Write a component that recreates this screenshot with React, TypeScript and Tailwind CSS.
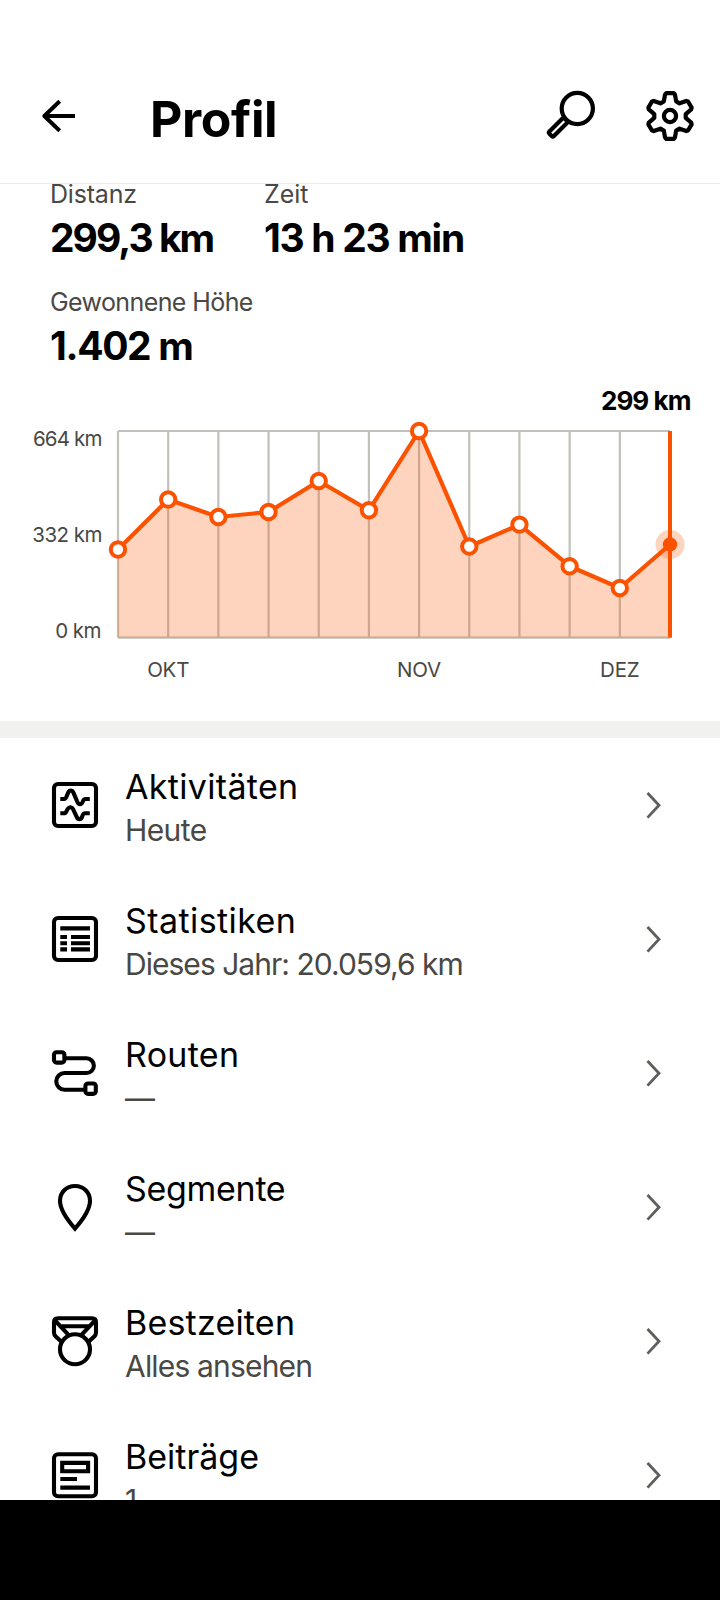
import type { ReactNode } from 'react';
import { clsx } from 'clsx';

const weeks = [
    { y: 549.5 },
    { y: 499.5, month: 'OKT' },
    { y: 517 },
    { y: 512 },
    { y: 481 },
    { y: 510.3 },
    { y: 431, month: 'NOV' },
    { y: 546.5 },
    { y: 524.6 },
    { y: 566.2 },
    { y: 588, month: 'DEZ' },
    { y: 544.5 },
];

const CHART = { left: 118, right: 670, top: 431, bottom: 637.7 };

// Six teeth around the origin
const gearPoints = Array.from({ length: 6 }, (_, i) => {
    const a = (i * Math.PI) / 3;
    return [[-6.2, -14.6], [-4.9, -21.6], [-3.6, -22.9], [3.6, -22.9], [4.9, -21.6], [6.2, -14.6]]
        .map(([x, y]) => `${(x * Math.cos(a) - y * Math.sin(a)).toFixed(2)},${(x * Math.sin(a) + y * Math.cos(a)).toFixed(2)}`)
        .join(' ');
}).join(' ');

function Chart() {
    const step = (CHART.right - CHART.left) / (weeks.length - 1);
    const points = weeks.map((w, i) => ({ ...w, x: CHART.left + i * step }));
    const line = points.map(p => `${p.x},${p.y}`).join(' ');
    const last = points[points.length - 1];

    return (
        <svg width="720" height="351" viewBox="0 370 720 351" className="block shrink-0">
            <g stroke="#c1c0ba" strokeWidth="2.2">
                {points.map(p => (
                    <line key={p.x} x1={p.x} x2={p.x} y1={CHART.top} y2={CHART.bottom} />
                ))}
                <line x1={CHART.left} x2={CHART.right} y1={CHART.top} y2={CHART.top} />
                <line x1={CHART.left} x2={CHART.right} y1={CHART.bottom} y2={CHART.bottom} />
            </g>
            <polygon points={`${CHART.left},${CHART.bottom} ${line} ${CHART.right},${CHART.bottom}`} fill="#fc5200" fillOpacity="0.25" />
            <circle cx={last.x} cy={last.y} r="14.5" fill="#fc5200" fillOpacity="0.25" />
            <line x1={CHART.right} x2={CHART.right} y1={CHART.top} y2={CHART.bottom} stroke="#fc5200" strokeWidth="4" />
            <polyline points={line} fill="none" stroke="#fc5200" strokeWidth="4.2" strokeLinejoin="round" />
            {points.slice(0, -1).map(p => (
                <circle key={p.x} cx={p.x} cy={p.y} r="7.2" fill="white" stroke="#fc5200" strokeWidth="4" />
            ))}
            <circle cx={last.x} cy={last.y} r="7.2" fill="#fc5200" />

            <g fill="#494844" className="text-[20.5px]">
                <text x="33" y="446" className="tracking-[-0.85px]">664 km</text>
                <text x="32.3" y="542" className="tracking-[-0.55px]">332 km</text>
                <text x="55.3" y="637.5" className="tracking-[-0.6px]">0 km</text>
            </g>
            <g fill="#494844" className="text-[20.5px] tracking-[-0.2px]" textAnchor="middle">
                {points.filter(p => p.month).map(p => (
                    <text key={p.month} x={p.x} y="677">{p.month}</text>
                ))}
            </g>
            <text x="601" y="410" className="text-[26px] font-bold tracking-[-0.95px]">299 km</text>
        </svg>
    );
}

interface StatProps {
    label: string;
    value: string;
    labelClass?: string;
    valueClass: string;
}

function Stat({ label, value, labelClass, valueClass }: StatProps) {
    return (
        <div>
            <div className={clsx('text-[25px] leading-[30px] text-[#494844] whitespace-nowrap', labelClass)}>{label}</div>
            <div className={clsx('mt-[5px] text-[39px] leading-[48px] font-bold whitespace-nowrap', valueClass)}>{value}</div>
        </div>
    );
}

const rows: { title: string; titleClass?: string; sub: string; subClass?: string; icon: ReactNode }[] = [
    {
        title: 'Aktivitäten',
        titleClass: 'tracking-[0.33px]',
        sub: 'Heute',
        subClass: 'tracking-[-0.6px]',
        icon: (
            <>
                <rect x="3" y="3" width="42" height="42" rx="4" />
                <path d="M9.3 18H13.2C14.6 18 15 17 15.6 15.4L17.2 11.6C18.4 8.7 21.2 8.7 22.4 11.6L26.4 21C27.6 23.8 30.4 23.8 31.6 21L32 20C32.6 18.6 33.2 18 34.6 18H38.8" />
                <path d="M9.3 32.3H13C14.4 32.3 15 31.6 15.6 30L16.8 27.8C18.2 25.5 21 25.7 22.2 28.3L25.8 36.2C27 38.9 29.8 38.9 31 36.2L31.4 34.8C32 33 32.8 32.3 34.2 32.3H38.8" />
            </>
        ),
    },
    {
        title: 'Statistiken',
        titleClass: 'tracking-[0.42px]',
        sub: 'Dieses Jahr: 20.059,6 km',
        subClass: 'tracking-[-0.97px]',
        icon: (
            <>
                <rect x="3" y="3" width="42" height="42" rx="4" />
                <path d="M9.3 13.4H39M9.3 22H16M20 22H39M9.3 28.2H16M20 28.2H39M9.3 34.4H16M20 34.4H39" />
            </>
        ),
    },
    {
        title: 'Routen',
        titleClass: 'tracking-[0.3px]',
        sub: '—',
        icon: (
            <>
                <rect x="3" y="3.2" width="10.4" height="10.4" rx="2.6" />
                <rect x="34.4" y="34.5" width="10.4" height="10.4" rx="2.6" />
                <path d="M14.5 9.3H35.5A7.3 7.3 0 0 1 35.5 24H13.6A8.3 8.3 0 0 0 13.6 40.7H33.5" />
            </>
        ),
    },
    {
        title: 'Segmente',
        titleClass: 'tracking-[-0.3px]',
        sub: '—',
        icon: <path strokeLinejoin="miter" d="M24 3C15.3 3 9 9.3 9 17.8C9 26.5 15.5 36 24 45.6C32.5 36 39 26.5 39 17.8C39 9.3 32.7 3 24 3Z" />,
    },
    {
        title: 'Bestzeiten',
        titleClass: 'tracking-[0.2px]',
        sub: 'Alles ansehen',
        subClass: 'tracking-[-0.82px]',
        icon: (
            <>
                <circle cx="24" cy="32.3" r="15" />
                <path d="M10.2 24.6L5 19.8C3.6 18.5 3 17.4 3 15.8V5.4C3 2.8 4.6 1.3 7 1.3H41C43.4 1.3 45 2.8 45 5.4V15.8C45 17.4 44.4 18.5 43 19.8L37.8 24.6" />
                <path d="M4 3.5L18 18.3M44 3.5L30 18.3M9.5 9.3H38.5" />
            </>
        ),
    },
    {
        title: 'Beiträge',
        sub: '1',
        icon: (
            <>
                <rect x="3" y="3.2" width="42" height="42" rx="4" />
                <path strokeLinejoin="miter" d="M11.2 11.9H37.1V20.3H11.2ZM9.3 28H26M9.3 36.6H39" />
            </>
        ),
    },
];

export default function App() {
    return (
        <div className="flex h-[1600px] w-[720px] flex-col overflow-hidden bg-white font-['Inter','Liberation_Sans',sans-serif] text-black">
            <header className="relative z-10 flex h-[184px] shrink-0 items-start border-b border-[#ebebea] bg-white pt-[88px] pl-[40px]">
                <svg width="40" height="56" viewBox="40 88 40 56" fill="none" stroke="black" strokeWidth="4" strokeLinejoin="round">
                    <path d="M75 116H45M59.7 101.3L44.3 116L59.7 130.7" />
                </svg>
                <h1 className="ml-[70px] text-[50px] leading-[62px] font-bold tracking-[-0.4px]">Profil</h1>
                <svg width="180" height="56" viewBox="540 88 180 56" fill="none" stroke="black" strokeWidth="4.2" strokeLinejoin="round" className="ml-auto">
                    <circle cx="577.3" cy="108.5" r="15.6" />
                    <rect x="-3.2" y="0" width="6.4" height="21.5" rx="1.5" transform="translate(565.8 119.7) rotate(45)" />
                    <g transform="translate(670 116)">
                        <polygon points={gearPoints} />
                        <circle r="6.1" />
                    </g>
                </svg>
            </header>

            <main className="flex h-[1316px] shrink-0 flex-col overflow-hidden">
                <section className="-mt-[5px] flex h-[191px] shrink-0 flex-col gap-[25px] pl-[50px]">
                    <div className="grid grid-cols-[214px_1fr]">
                        <Stat label="Distanz" value="299,3 km" labelClass="tracking-[-0.2px]" valueClass="tracking-[-1.95px]" />
                        <Stat label="Zeit" value="13 h 23 min" valueClass="tracking-[-1.3px]" />
                    </div>
                    <Stat label="Gewonnene Höhe" value="1.402 m" labelClass="tracking-[-0.6px]" valueClass="tracking-[-1.35px]" />
                </section>

                <Chart />
                <div className="h-[17px] shrink-0 bg-[#f1f1ef]" />

                {rows.map(row => (
                    <div key={row.title} className="flex h-[134px] shrink-0 items-center pr-[58px] pl-[51px]">
                        <svg width="48" height="48" viewBox="0 0 48 48" fill="none" stroke="black" strokeWidth="4.1" strokeLinejoin="round" className="shrink-0 overflow-visible">
                            {row.icon}
                        </svg>
                        <div className="ml-[26px] flex-1 self-start pt-[27px]">
                            <div className={clsx('text-[34px] leading-[44px]', row.titleClass)}>{row.title}</div>
                            <div className={clsx('text-[30px] leading-[43px] text-[#494844]', row.subClass)}>{row.sub}</div>
                        </div>
                        <svg width="16" height="28" viewBox="0 0 16 28" fill="none" stroke="#5f5e5a" strokeWidth="2.8">
                            <path d="M1.5 2L13 14.3L1.5 26.6" />
                        </svg>
                    </div>
                ))}
            </main>

            <footer className="h-[100px] shrink-0 bg-black" />
        </div>
    );
}
